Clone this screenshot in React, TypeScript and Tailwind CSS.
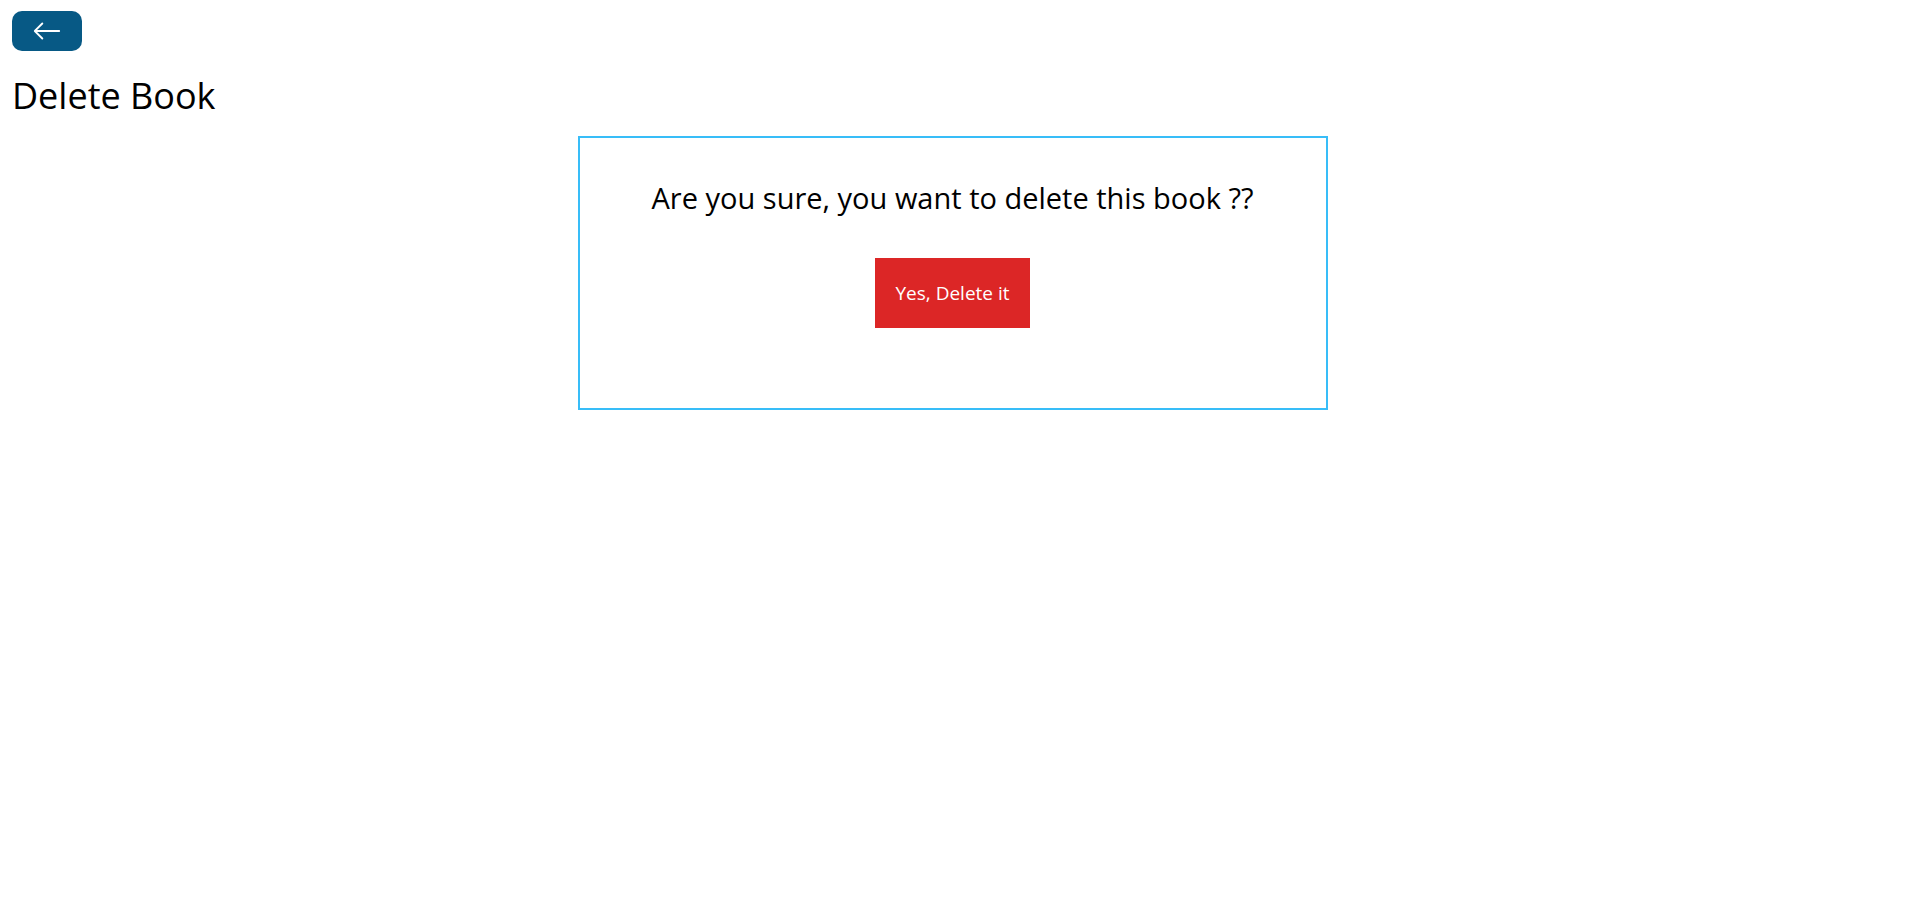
import React from "react";
import { BsArrowLeft } from "react-icons/bs";

export default function App() {
  return (
    <main className="px-3 pt-[11px] pb-3 font-['Open_Sans','Noto_Sans',sans-serif] text-black">
      <div className="flex">
        <a
          href="#home"
          aria-label="Back"
          className="w-fit rounded-[10px] bg-[#075985] px-5 py-[5px] text-white"
        >
          <BsArrowLeft className="text-3xl" />
        </a>
      </div>
      <h1 className="mt-[25px] mb-5 text-4xl leading-10">Delete Book</h1>
      <section className="mx-auto flex w-[750px] max-w-full flex-col items-center border-2 border-[#38bdf8] p-10">
        <h2 className="text-[29px] leading-10">Are you sure, you want to delete this book ??</h2>
        <button type="button" className="m-10 bg-[#dc2626] p-5 text-[19px] leading-[30px] text-white">
          Yes, Delete it
        </button>
      </section>
    </main>
  );
}
